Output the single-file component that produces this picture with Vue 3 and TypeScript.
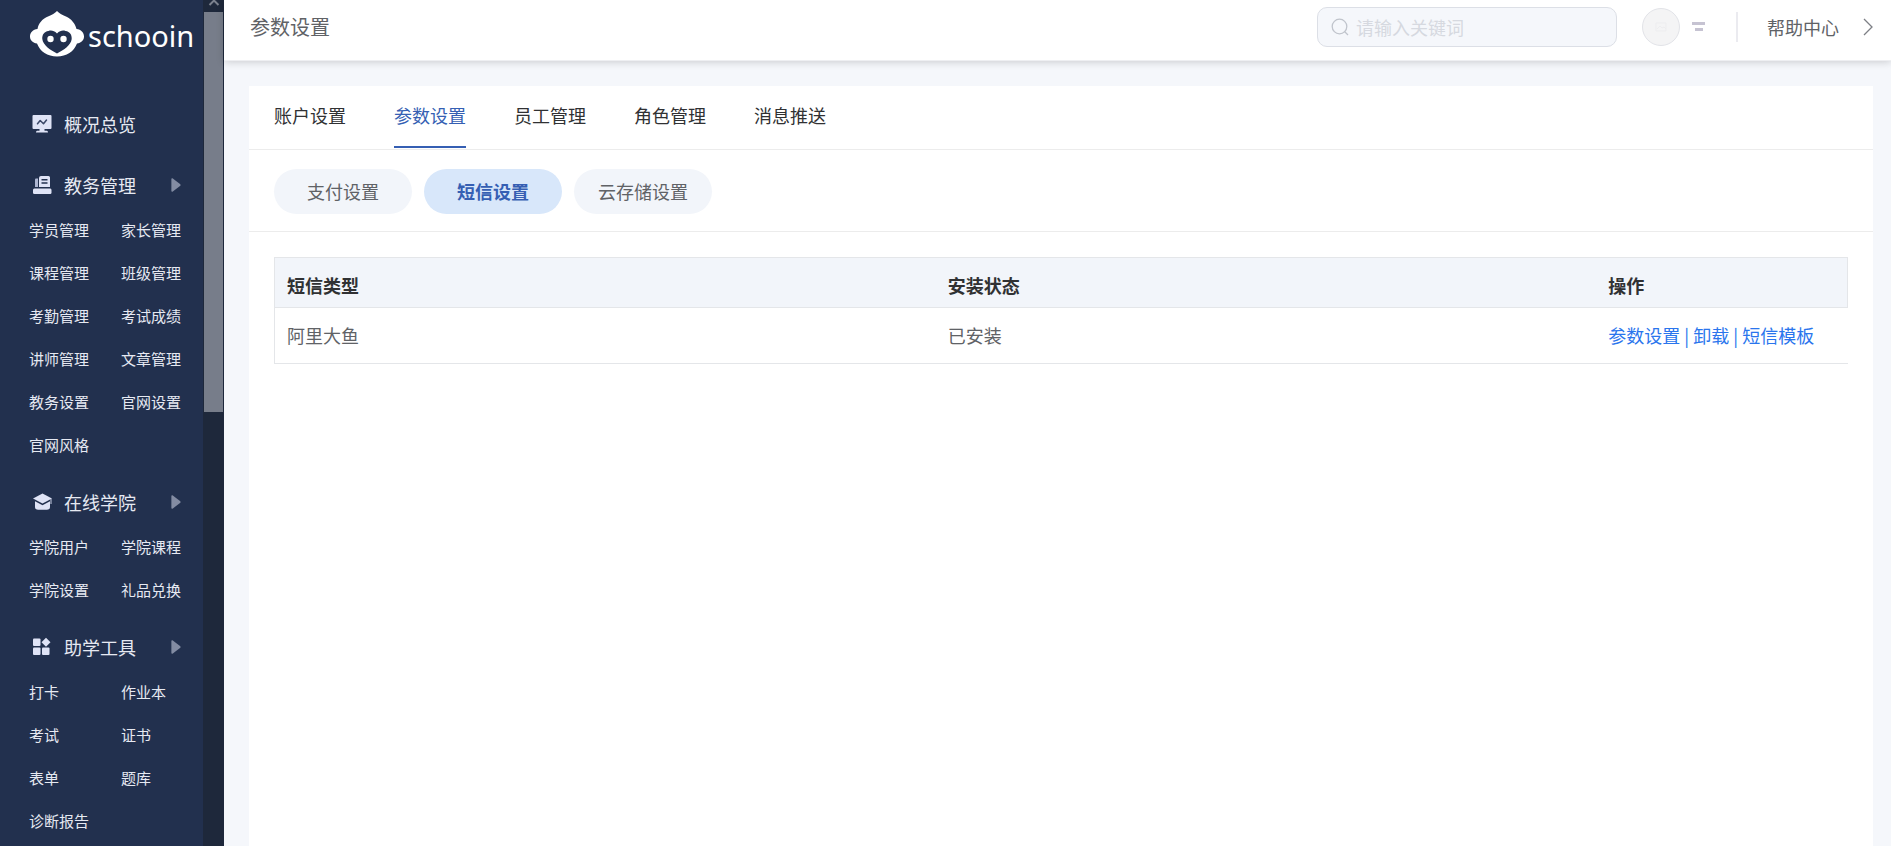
<script setup lang="ts">
import { ref } from 'vue'

interface MenuGroup {
  title: string
  icon: 'desk' | 'cap' | 'grid'
  items: string[]
}

const groups: MenuGroup[] = [
  {
    title: '教务管理',
    icon: 'desk',
    items: ['学员管理', '家长管理', '课程管理', '班级管理', '考勤管理', '考试成绩', '讲师管理', '文章管理', '教务设置', '官网设置', '官网风格'],
  },
  { title: '在线学院', icon: 'cap', items: ['学院用户', '学院课程', '学院设置', '礼品兑换'] },
  { title: '助学工具', icon: 'grid', items: ['打卡', '作业本', '考试', '证书', '表单', '题库', '诊断报告'] },
]

const tabs = ['账户设置', '参数设置', '员工管理', '角色管理', '消息推送']
const activeTab = ref('参数设置')

const pills = ['支付设置', '短信设置', '云存储设置']
const activePill = ref('短信设置')

const rows = [{ type: '阿里大鱼', status: '已安装', actions: ['参数设置', '卸载', '短信模板'] }]

const keyword = ref('')
</script>

<template>
  <div class="layout">
    <aside class="sidebar">
      <div class="menu">
        <a class="logo" href="#" aria-label="schooin">
          <svg class="logo-mark" viewBox="0 0 54 46" width="54" height="46" aria-hidden="true">
            <path fill="#fff" d="M27 0C25 2 22 4 18 5.500C12 8 8.500 12.500 7.500 18C3 18.500 0 21.500 0 25.500C0 29.500 3 32 7 32.500C10 40.500 17.500 45.500 27 45.500S44 40.500 47 32.500C51 32 54 29.500 54 25.500C54 21.500 51 18.500 46.500 18C45 12.500 41.500 8 36 5.500C32 4 29 2 27 0Z" />
            <path fill="#22304e" d="M27 22.500C24 19.500 21 19 18.500 20C14 20.500 12 24 12.300 28C13 34 20 39 27 42.500C34 39 41 34 41.700 28C42 24 40 20.500 35.500 20C33 19 30 19.500 27 22.500Z" />
            <circle cx="20.500" cy="28" r="3.200" fill="#fff" />
            <circle cx="33.500" cy="28" r="3.200" fill="#fff" />
          </svg>
          <span class="logo-text">schooin</span>
        </a>
        <nav>
          <a class="menu-title overview" href="#">
            <svg class="menu-icon" viewBox="0 0 20 20" width="20" height="20" aria-hidden="true">
              <path fill="#dfe3f6" d="M1.500 1h17a1 1 0 0 1 1 1v12a1 1 0 0 1-1 1h-6v1.800H15a1.500 1.500 0 0 1 1 1.700H4a1.500 1.500 0 0 1 1-1.700h2.500V15h-6a1 1 0 0 1-1-1V2a1 1 0 0 1 1-1Z" />
              <path fill="none" stroke="#3b4868" stroke-width="1.500" stroke-linecap="round" stroke-linejoin="round" d="M5.500 9.800l2.700-3.300 3.300 3.300 3-3.800" />
            </svg>
            <span>概况总览</span>
          </a>
          <section v-for="group in groups" :key="group.title" class="menu-group">
            <a class="menu-title" href="#">
              <svg v-if="group.icon === 'desk'" class="menu-icon" viewBox="0 0 20 20" width="20" height="20" aria-hidden="true">
                <path fill="#dfe3f6" fill-rule="evenodd" d="M9 1h7.500Q18 1 18 2.500V12H7V3Q7 1 9 1ZM9.500 4v1.400h6V4ZM9.500 7.300v1.400h6V7.300Z" />
                <path fill="#aeb6d2" d="M3 4.500Q3 3.500 4 3.500H6V12H3Z" />
                <path fill="#dfe3f6" d="M2.300 13.500h16q1.200 0 1.200 1.500v2.500q0 1.500-1.200 1.500h-16Q1 19 1 17.500V15q0-1.500 1.300-1.500Z" />
              </svg>
              <svg v-else-if="group.icon === 'cap'" class="menu-icon" viewBox="0 0 20 20" width="20" height="20" aria-hidden="true">
                <path fill="#dfe3f6" d="M10.500 1.500L20 6.500 10.500 11.500 1 6.500Z" />
                <path fill="#dfe3f6" d="M3 9.300l7.500 3.900L18 9.300v5.700q0 2.700-3 2.700H6q-3 0-3-2.700Z" />
                <path fill="none" stroke="#c7cde3" d="M19 7v5" />
              </svg>
              <svg v-else class="menu-icon" viewBox="0 0 20 20" width="20" height="20" aria-hidden="true">
                <g fill="#dfe3f6">
                  <rect x="1" y="1.500" width="7.500" height="7.500" rx="1" />
                  <rect x="1" y="10.500" width="7.500" height="7.500" rx="1" />
                  <rect x="10" y="10.500" width="7.500" height="7.500" rx="1" />
                  <path d="M14 .8L18.500 5.300 14 9.800 9.500 5.300Z" />
                </g>
              </svg>
              <span>{{ group.title }}</span>
              <svg class="menu-arrow" viewBox="0 0 10 14" width="10" height="14" aria-hidden="true">
                <path fill="#838ca3" d="M1.500 0.300L9.300 6.300Q9.900 7 9.300 7.700L1.500 13.700Q.4 14 .4 13V1Q.4 0 1.500 .3Z" />
              </svg>
            </a>
            <ul class="submenu">
              <li v-for="item in group.items" :key="item"><a href="#">{{ item }}</a></li>
            </ul>
          </section>
        </nav>
      </div>
      <div class="scrollbar" aria-hidden="true">
        <svg class="scroll-up" viewBox="0 0 20 12" width="20" height="12">
          <path fill="none" stroke="#7b818d" stroke-width="2" d="M5.500 5L10 .5 14.500 5" />
        </svg>
        <div class="thumb"></div>
      </div>
    </aside>

    <div class="page">
      <header class="topbar">
        <h1>参数设置</h1>
        <label class="search">
          <svg viewBox="0 0 18 18" width="18" height="18" aria-hidden="true">
            <circle cx="8.500" cy="8.500" r="7.300" fill="none" stroke="#c0c4cc" stroke-width="1.300" />
            <path stroke="#c0c4cc" stroke-width="1.300" d="M13.500 13.500L17 17" />
          </svg>
          <input v-model="keyword" type="text" placeholder="请输入关键词" aria-label="请输入关键词" />
        </label>
        <button class="account" type="button" aria-label="账户">
          <span class="avatar">
            <svg viewBox="0 0 12 12" width="12" height="12" aria-hidden="true">
              <path fill="none" stroke="#ededef" d="M1 2h10v8H1ZM2 8l3-3 2 2 2-1 2 2" />
            </svg>
          </span>
          <svg viewBox="0 0 14 10" width="14" height="10" aria-hidden="true">
            <path fill="#c6c3d2" d="M0 0h13v3H0ZM3 6h8v3H3Z" />
          </svg>
        </button>
        <a class="help" href="#">
          <span>帮助中心</span>
          <svg viewBox="0 0 10 18" width="10" height="18" aria-hidden="true">
            <path fill="none" stroke="#7d7f85" stroke-width="1.300" d="M1 1l8 8-8 8" />
          </svg>
        </a>
      </header>

      <main class="card">
        <nav class="tabs">
          <button v-for="tab in tabs" :key="tab" type="button" :class="{ active: tab === activeTab }" @click="activeTab = tab">{{ tab }}</button>
        </nav>
        <div class="pills">
          <button v-for="pill in pills" :key="pill" type="button" :class="{ active: pill === activePill }" @click="activePill = pill">{{ pill }}</button>
        </div>
        <div class="table-wrap">
          <table>
            <thead>
              <tr>
                <th class="wide" scope="col">短信类型</th>
                <th class="wide" scope="col">安装状态</th>
                <th scope="col">操作</th>
              </tr>
            </thead>
            <tbody>
              <tr v-for="row in rows" :key="row.type">
                <td>{{ row.type }}</td>
                <td>{{ row.status }}</td>
                <td class="actions">
                  <template v-for="(action, i) in row.actions" :key="action"><span v-if="i > 0"> | </span><a href="#">{{ action }}</a></template>
                </td>
              </tr>
            </tbody>
          </table>
        </div>
      </main>
    </div>
  </div>
</template>

<style>
body {
  margin: 0;
}
</style>

<style scoped>
.layout {
  display: flex;
  height: 100vh;
  overflow: hidden;
  background: #f5f7fb;
  font-family: "Noto Sans CJK SC", sans-serif;
  font-size: 18px;
  color: #606266;
}
.layout * {
  box-sizing: border-box;
}
a {
  color: inherit;
  text-decoration: none;
}
button {
  font: inherit;
  color: inherit;
  border: 0;
  padding: 0;
  background: none;
  cursor: pointer;
}
.sidebar {
  display: flex;
  flex: none;
  width: 224px;
  background: #22304e;
  color: #e6e9f2;
}
.menu {
  flex: 1;
  overflow: hidden;
}
.logo {
  display: flex;
  gap: 4px;
  height: 100px;
  padding: 11px 0 0 30px;
}
.logo-text {
  font-family: "Noto Sans", sans-serif;
  font-size: 29px;
  line-height: 50px;
  color: #fff;
}
.menu-title {
  display: flex;
  align-items: center;
  height: 47px;
  padding: 0 22px 0 32px;
  line-height: 28px;
}
.menu-icon {
  margin-right: 12px;
}
.menu-arrow {
  margin-left: auto;
}
.overview {
  margin-bottom: 14px;
}
.menu-group {
  margin-bottom: 12px;
}
.submenu {
  display: grid;
  grid-template-columns: 92px 1fr;
  margin: 0;
  padding: 0 0 0 29px;
  list-style: none;
  font-size: 15px;
  line-height: 43px;
}
.submenu a {
  display: block;
}
.scrollbar {
  display: flex;
  flex-direction: column;
  flex: none;
  width: 21px;
  padding: 0 1px;
  background: #1e283b;
}
.scroll-up {
  flex: none;
}
.thumb {
  height: 400px;
  background: #777d8a;
}
.page {
  display: flex;
  flex: 1;
  flex-direction: column;
  min-width: 0;
}
.topbar {
  display: flex;
  flex: none;
  align-items: center;
  height: 61px;
  padding: 0 18px 6px 26px;
  background: #fff;
  border-bottom: 1px solid #eeeff2;
  box-shadow: 0 1px 8px rgba(0, 0, 0, 0.18);
}
h1 {
  margin: 0 auto 0 0;
  font-size: 20px;
  font-weight: 400;
  line-height: 30px;
}
.search {
  display: flex;
  align-items: center;
  gap: 7px;
  width: 300px;
  height: 40px;
  padding: 0 13px;
  border: 1px solid #dcdfe6;
  border-radius: 10px;
  background: #f5f7fb;
}
.search svg {
  flex: none;
}
.search input {
  flex: 1;
  min-width: 0;
  padding: 0;
  border: 0;
  outline: 0;
  background: none;
  font: inherit;
}
.search input::placeholder {
  color: #d6d9e0;
  opacity: 1;
}
.account {
  display: flex;
  align-items: center;
  gap: 12px;
  margin: 0 30px 0 25px;
}
.avatar {
  display: flex;
  align-items: center;
  justify-content: center;
  width: 38px;
  height: 38px;
  border: 1px solid #e2e3e8;
  border-radius: 50%;
  background: #f4f4f5;
}
.help {
  display: flex;
  align-items: center;
  gap: 24px;
  height: 30px;
  padding-left: 29px;
  border-left: 2px solid #ebebf0;
}
.card {
  flex: 1;
  margin: 25px 18px 0 25px;
  background: #fff;
}
.tabs {
  display: flex;
  gap: 48px;
  height: 64px;
  padding: 0 25px 1px;
  border-bottom: 1px solid #ececec;
  color: #303133;
}
.tabs button {
  padding-bottom: 2px;
  border-bottom: 2px solid transparent;
}
.tabs .active {
  border-bottom-color: #355fb3;
  color: #355fb3;
}
.pills {
  display: flex;
  gap: 12px;
  padding: 19px 25px 17px;
  border-bottom: 1px solid #ececec;
}
.pills button {
  width: 138px;
  height: 45px;
  padding-bottom: 2px;
  border-radius: 23px;
  background: #f2f5fa;
}
.pills .active {
  background: #d8e7fa;
  color: #355fb3;
  font-weight: 700;
}
.table-wrap {
  padding: 25px;
}
table {
  width: 100%;
  border: 1px solid #e4e6e9;
  border-right: 0;
  border-spacing: 0;
  table-layout: fixed;
  text-align: left;
}
th {
  height: 50px;
  padding: 4px 12px 0;
  border-bottom: 1px solid #e4e6e9;
  background: #f2f5fa;
  color: #303133;
  font-weight: 700;
}
th:last-child {
  border-right: 1px solid #e4e6e9;
}
.wide {
  width: 42%;
}
td {
  height: 55px;
  padding: 0 12px 2px;
}
.actions {
  color: #2a75ed;
  white-space: nowrap;
}
</style>
